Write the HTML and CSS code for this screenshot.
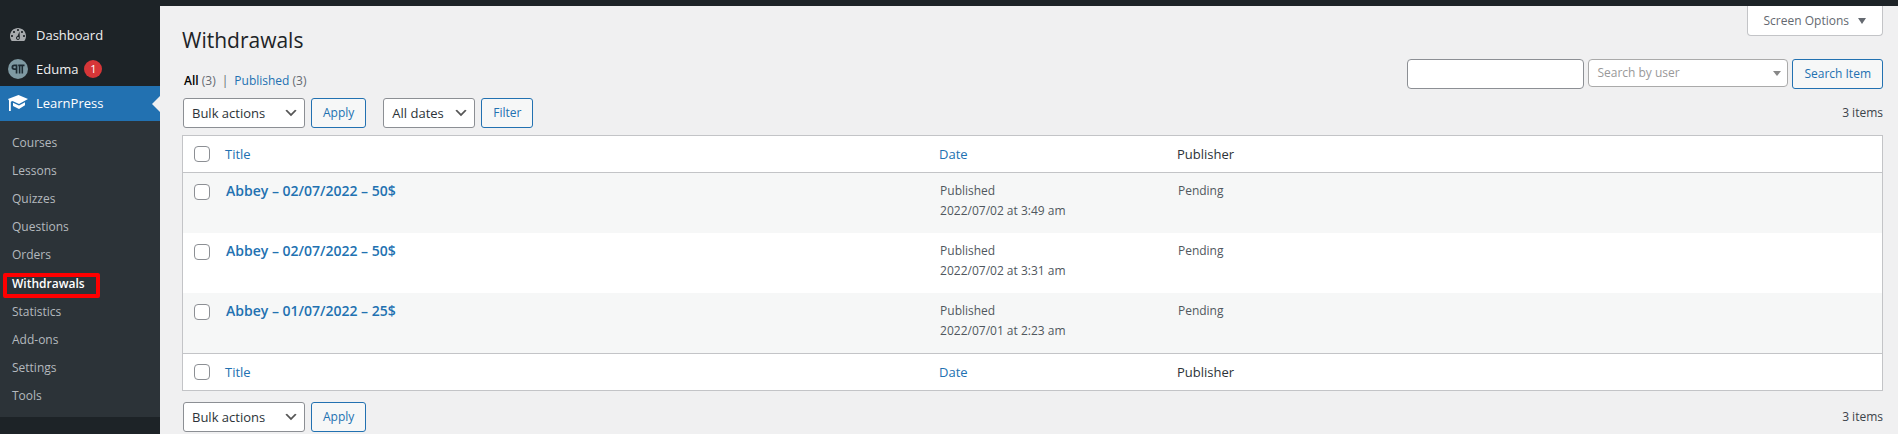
FILE: index.html
```html
<!DOCTYPE html>
<html lang="en">
<head>
<meta charset="utf-8">
<title>Withdrawals</title>
<link rel="stylesheet" href="styles.css">
</head>
<body>
<div class="adminbar"></div>
<div class="layout">
  <nav class="sidebar" aria-label="Main menu">
    <ul class="menu">
      <li><a class="menu-link" href="#">
        <svg class="menu-icon" viewBox="0 0 20 20" fill="#a7aaad" fill-rule="evenodd" aria-hidden="true"><path d="M3.760 16h12.480c1.100-1.370 1.760-3.110 1.760-5 0-4.420-3.580-8-8-8s-8 3.580-8 8c0 1.890.66 3.630 1.760 5zM10 4c.55 0 1 .45 1 1s-.45 1-1 1-1-.45-1-1 .45-1 1-1zM6 6c.55 0 1 .45 1 1s-.45 1-1 1-1-.45-1-1 .45-1 1-1zm8 0c.55 0 1 .45 1 1s-.45 1-1 1-1-.45-1-1 .45-1 1-1zM4 10c.55 0 1 .45 1 1s-.45 1-1 1-1-.45-1-1 .45-1 1-1zm12 0c.55 0 1 .45 1 1s-.45 1-1 1-1-.45-1-1 .45-1 1-1zM11.500 6.500l.3 5.700c.2 1.500-.6 2.800-1.800 2.800s-2.100-1-2-2.200c.1-.9.700-1.500 1.500-1.800zM10 12a1 1 0 1 0 0 2 1 1 0 0 0 0-2z"/></svg>
        Dashboard</a></li>
      <li><a class="menu-link" href="#">
        <svg class="menu-icon" viewBox="0 0 20 20" aria-hidden="true"><circle cx="10" cy="10" r="10" fill="#7f9aa3"/><path d="M3.500 8.300a2.700 2.700 0 0 1 2.700-2.700H9.400v9H7.700V11H6.200a2.700 2.700 0 0 1-2.700-2.700zM10.200 5.600h6.300v1.700h-1.400v7.300h-1.600V7.300h-1.100v7.300h-1.600V7.300h-.6z" fill="#1d2b33"/><path d="M6.300 7.300h1.400v2H6.300a1 1 0 0 1 0-2z" fill="#7f9aa3"/></svg>
        Eduma <span class="badge">1</span></a></li>
      <li><a class="menu-link menu-link-current" href="#">
        <svg class="menu-icon" viewBox="0 0 20 20" fill="#fff" aria-hidden="true"><path d="M10.500 2L20 6l-9 5-6.500-3-1.700.8V18H1V7.500L0 6z"/><path d="M5 9.700l6 2.800 6-3.300v3L11 16l-6-3z"/></svg>
        LearnPress</a>
        <ul class="submenu">
          <li><a href="#">Courses</a></li>
          <li><a href="#">Lessons</a></li>
          <li><a href="#">Quizzes</a></li>
          <li><a href="#">Questions</a></li>
          <li><a href="#">Orders</a></li>
          <li class="submenu-current"><a href="#" aria-current="page">Withdrawals</a></li>
          <li><a href="#">Statistics</a></li>
          <li><a href="#">Add-ons</a></li>
          <li><a href="#">Settings</a></li>
          <li><a href="#">Tools</a></li>
        </ul>
      </li>
    </ul>
  </nav>

  <main class="content">
    <header class="page-head">
      <div class="page-heading">
        <h1>Withdrawals</h1>
        <div class="views">
          <a class="view-current" href="#">All <span class="count">(3)</span></a>
          <span class="views-sep">|</span>
          <a href="#">Published <span class="count">(3)</span></a>
        </div>
      </div>
      <div class="page-tools">
        <button class="screen-options" type="button">Screen Options <span class="triangle" aria-hidden="true"></span></button>
        <form class="search">
          <input class="search-text" type="text" aria-label="Search withdrawals">
          <span class="user-wrap">
            <select class="user-select" aria-label="Search by user"><option>Search by user</option></select>
            <span class="triangle" aria-hidden="true"></span>
          </span>
          <button class="button" type="button">Search Item</button>
        </form>
      </div>
    </header>

    <div class="tablenav tablenav-top">
      <div class="action-group">
        <span class="select-wrap select-bulk">
          <select aria-label="Bulk actions"><option>Bulk actions</option></select>
          <svg class="chevron" viewBox="0 0 20 20" aria-hidden="true"><path d="M5 6l5 5 5-5 2 1-7 7-7-7 2-1z" fill="#555"/></svg>
        </span>
        <button class="button" type="button">Apply</button>
      </div>
      <div class="action-group">
        <span class="select-wrap select-dates">
          <select aria-label="Filter by date"><option>All dates</option></select>
          <svg class="chevron" viewBox="0 0 20 20" aria-hidden="true"><path d="M5 6l5 5 5-5 2 1-7 7-7-7 2-1z" fill="#555"/></svg>
        </span>
        <button class="button" type="button">Filter</button>
      </div>
      <span class="item-count">3 items</span>
    </div>

    <table class="list">
      <colgroup><col class="col-check"><col><col class="col-date"><col></colgroup>
      <thead>
        <tr>
          <th class="check"><input type="checkbox" aria-label="Select all"></th>
          <th><a href="#">Title</a></th>
          <th><a href="#">Date</a></th>
          <th>Publisher</th>
        </tr>
      </thead>
      <tbody>
        <tr>
          <td class="check"><input type="checkbox" aria-label="Select Abbey, 02/07/2022, 50$"></td>
          <td><a class="row-title" href="#">Abbey – 02/07/2022 – 50$</a></td>
          <td>Published<br>2022/07/02 at 3:49 am</td>
          <td>Pending</td>
        </tr>
        <tr>
          <td class="check"><input type="checkbox" aria-label="Select Abbey, 02/07/2022, 50$"></td>
          <td><a class="row-title" href="#">Abbey – 02/07/2022 – 50$</a></td>
          <td>Published<br>2022/07/02 at 3:31 am</td>
          <td>Pending</td>
        </tr>
        <tr>
          <td class="check"><input type="checkbox" aria-label="Select Abbey, 01/07/2022, 25$"></td>
          <td><a class="row-title" href="#">Abbey – 01/07/2022 – 25$</a></td>
          <td>Published<br>2022/07/01 at 2:23 am</td>
          <td>Pending</td>
        </tr>
      </tbody>
      <tfoot>
        <tr>
          <th class="check"><input type="checkbox" aria-label="Select all"></th>
          <th><a href="#">Title</a></th>
          <th><a href="#">Date</a></th>
          <th>Publisher</th>
        </tr>
      </tfoot>
    </table>

    <div class="tablenav tablenav-bottom">
      <div class="action-group">
        <span class="select-wrap select-bulk">
          <select aria-label="Bulk actions"><option>Bulk actions</option></select>
          <svg class="chevron" viewBox="0 0 20 20" aria-hidden="true"><path d="M5 6l5 5 5-5 2 1-7 7-7-7 2-1z" fill="#555"/></svg>
        </span>
        <button class="button" type="button">Apply</button>
      </div>
      <span class="item-count">3 items</span>
    </div>
  </main>
</div>
</body>
</html>
```
FILE: styles.css
```css
*,
*::after {
  box-sizing: border-box;
}

body {
  margin: 0;
  background: #f0f0f1;
  color: #3c434a;
  font: 12px/20px "Segoe UI", "Open Sans", "Noto Sans", sans-serif;
}

a {
  color: #2271b1;
  text-decoration: none;
}

ul {
  margin: 0;
  padding: 0;
  list-style: none;
}

button,
input,
select {
  margin: 0;
  font: inherit;
}

.adminbar {
  height: 6px;
  background: #1d2327;
}

.layout {
  display: flex;
  min-height: calc(100vh - 6px);
}

/* Sidebar */

.sidebar {
  flex: 0 0 160px;
  padding-top: 12px;
  background: #1d2327;
}

.menu-link {
  position: relative;
  display: flex;
  align-items: center;
  gap: 8px;
  height: 34px;
  padding-left: 8px;
  color: #f0f0f1;
  font-size: 13px;
}

.menu-link-current {
  height: 35px;
  padding-bottom: 2px;
  background: #2271b1;
  color: #fff;
}

.menu-link-current::after {
  content: "";
  position: absolute;
  top: 50%;
  right: 0;
  margin-top: -8px;
  border: 8px solid transparent;
  border-left-width: 0;
  border-right-color: #f0f0f1;
}

.menu-icon {
  width: 20px;
  height: 20px;
}

.badge {
  min-width: 18px;
  margin-left: -2px;
  border-radius: 9px;
  background: #d63638;
  color: #fff;
  font-size: 11px;
  line-height: 18px;
  text-align: center;
}

.submenu {
  padding: 8px 0 7px;
  background: #2c3338;
}

.submenu a {
  display: block;
  padding: 4px 12px;
  color: #b4b9be;
}

.submenu-current {
  position: relative;
}

.submenu .submenu-current a {
  padding-top: 5px;
  color: #fff;
  font-weight: 600;
}

.submenu-current::after {
  content: "";
  position: absolute;
  top: 4px;
  left: 3px;
  width: 97px;
  height: 25px;
  border: 4px solid #f00;
  border-radius: 2px;
}

/* Page header */

.content {
  flex: 1;
  min-width: 0;
  padding: 0 15px 0 22px;
}

.page-head {
  display: flex;
  justify-content: space-between;
}

h1 {
  margin: 18px 0 0;
  color: #1d2327;
  font-size: 21px;
  font-weight: 400;
  line-height: 32px;
}

.views {
  display: flex;
  gap: 6px;
  margin-top: 15px;
  padding-left: 2px;
}

.views-sep,
.count {
  color: #646970;
}

.view-current {
  color: #000;
  font-weight: 600;
}

.view-current .count {
  font-weight: 400;
}

.page-tools {
  display: flex;
  flex-direction: column;
  align-items: flex-end;
  gap: 23px;
}

.screen-options {
  display: flex;
  align-items: center;
  gap: 9px;
  height: 30px;
  padding: 0 16px;
  border: 1px solid #c3c4c7;
  border-top: 0;
  border-radius: 0 0 4px 4px;
  background: #fff;
  color: #646970;
}

.triangle {
  border: 4px solid transparent;
  border-top: 6px solid currentColor;
  border-bottom-width: 0;
}

.search {
  display: flex;
  align-items: flex-start;
  gap: 4px;
}

.search-text {
  width: 177px;
  height: 30px;
  padding: 0 8px;
  border: 1px solid #8c8f94;
  border-radius: 4px;
  background: #fff;
}

.user-wrap {
  position: relative;
  color: #888;
}

.user-select {
  display: block;
  width: 200px;
  height: 28px;
  padding: 0 8px;
  border: 1px solid #aaa;
  border-radius: 4px;
  appearance: none;
  background: #fff;
  color: #999;
}

.user-wrap .triangle {
  position: absolute;
  top: 12px;
  right: 7px;
  border-top-width: 5px;
}

.button {
  height: 30px;
  padding: 0 11px;
  border: 1px solid #2271b1;
  border-radius: 3px;
  background: #f6f7f7;
  color: #2271b1;
  white-space: nowrap;
}

/* Table navigation */

.tablenav {
  display: flex;
  align-items: center;
  gap: 17px;
  padding-left: 1px;
}

.tablenav-top {
  margin: 7px 0;
}

.tablenav-bottom {
  margin-top: 11px;
}

.action-group {
  display: flex;
  gap: 6px;
}

.item-count {
  margin-left: auto;
}

.select-wrap {
  position: relative;
}

.select-wrap select {
  display: block;
  width: 100%;
  height: 30px;
  padding: 0 24px 0 8px;
  border: 1px solid #8c8f94;
  border-radius: 3px;
  appearance: none;
  background: #fff;
  color: #2c3338;
  font-size: 13px;
}

.select-bulk {
  width: 122px;
}

.select-dates {
  width: 92px;
}

.chevron {
  position: absolute;
  top: 7px;
  right: 6px;
  width: 16px;
  height: 16px;
  pointer-events: none;
}

/* List table */

.list {
  width: 100%;
  border: 1px solid #c3c4c7;
  border-spacing: 0;
  background: #fff;
  table-layout: fixed;
}

.col-check {
  width: 33px;
}

.col-date {
  width: 14%;
}

.list th {
  height: 37px;
  padding: 0 9px;
  color: #2c3338;
  font-size: 13px;
  font-weight: 400;
  text-align: left;
}

.list thead th {
  border-bottom: 1px solid #c3c4c7;
}

.list tfoot th {
  border-top: 1px solid #c3c4c7;
}

.list td {
  height: 60px;
  padding: 8px 10px;
  color: #50575e;
  vertical-align: top;
}

.list tbody tr:nth-child(odd) {
  background: #f6f7f7;
}

.list .check {
  padding-right: 0;
  padding-left: 11px;
}

.list td.check {
  padding-top: 11px;
}

.check input {
  display: block;
  width: 16px;
  height: 16px;
  border: 1px solid #8c8f94;
  border-radius: 4px;
  appearance: none;
  background: #fff;
}

.row-title {
  font-size: 14px;
  font-weight: 600;
}
```
